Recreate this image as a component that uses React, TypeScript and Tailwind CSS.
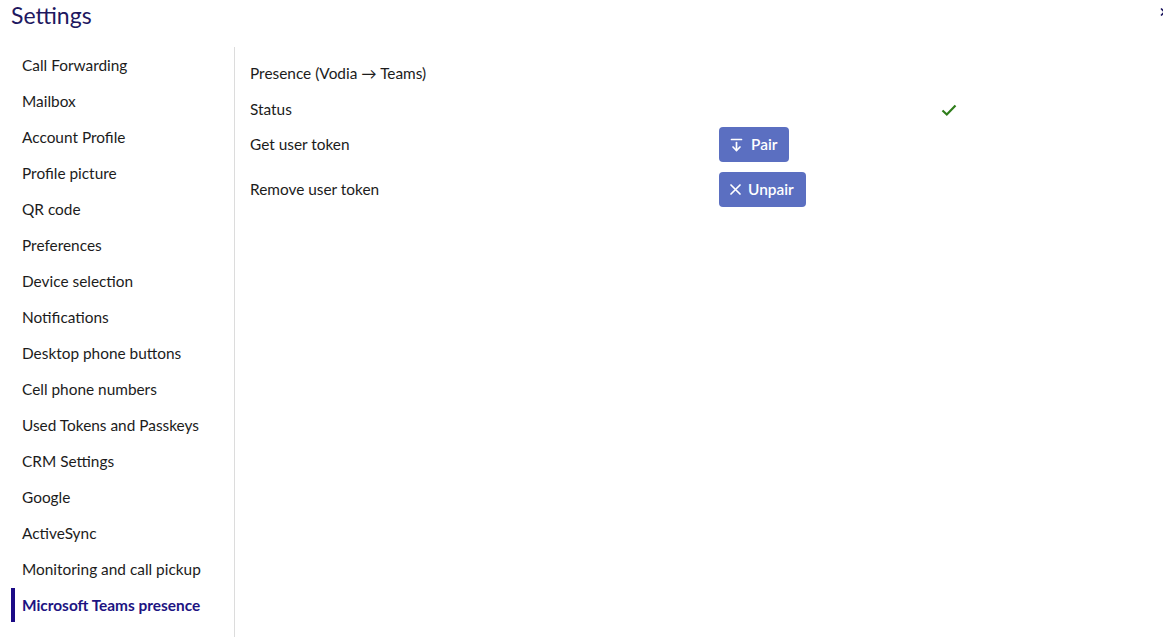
import React from "react";

const items = [
  "Call Forwarding",
  "Mailbox",
  "Account Profile",
  "Profile picture",
  "QR code",
  "Preferences",
  "Device selection",
  "Notifications",
  "Desktop phone buttons",
  "Cell phone numbers",
  "Used Tokens and Passkeys",
  "CRM Settings",
  "Google",
  "ActiveSync",
  "Monitoring and call pickup",
  "Microsoft Teams presence",
];

export default function App() {
  return (
    <div
      className="relative w-[1163px] h-[637px] overflow-hidden bg-white text-[#1c1c1c]"
      style={{ fontFamily: "Lato, 'Noto Sans', sans-serif" }}
    >
      <div className="h-[47px] pl-[11px]">
        <h1 className="text-[23px] leading-[31px] text-[#1e1860]">Settings</h1>
      </div>
      <svg className="absolute left-[1159px] top-[7px]" width="10" height="9" viewBox="0 0 10 9">
        <path d="M2 1.5 L9 8.5 M9 1.5 L2 8.5" stroke="#1e1860" strokeWidth="1.6" />
      </svg>
      <div className="flex">
        <nav className="w-[235px] h-[590px] border-r border-[#dcdcdc] pl-[11px]">
          {items.map((it, i) => {
            const active = i === items.length - 1;
            return (
              <div key={it} className="h-9 flex items-center">
                <div className={`w-[4px] h-[34px] ${active ? "bg-[#1c0b86]" : ""}`} />
                <span
                  className={`pl-[7px] pt-[2px] text-[15.4px] ${active ? "font-bold text-[#1d1482]" : ""}`}
                >
                  {it}
                </span>
              </div>
            );
          })}
        </nav>
        <div className="pl-[15px] pt-[9px] text-[15.4px]">
          <div className="h-9 flex items-center">Presence (Vodia → Teams)</div>
          <div className="h-9 flex items-center">
            <div className="w-[469px]">Status</div>
            <div className="w-[240px] flex">
              <svg className="ml-[222px] -mt-[1px]" width="16" height="14" viewBox="0 0 16 14">
                <path d="M1.5 7.5 L5.8 11.5 L14.5 2.5" fill="none" stroke="#2f7d1b" strokeWidth="2.2" />
              </svg>
            </div>
          </div>
          <div className="h-[35px] -mt-[1px] flex items-center">
            <div className="w-[469px] pt-[1px]">Get user token</div>
            <button className="h-[35px] rounded-[4px] bg-[#5b6fc1] text-white flex items-center pl-[11px] pr-[12px] gap-[8px] font-semibold">
              <svg width="13" height="14" viewBox="0 0 13 14" fill="none" stroke="white" strokeWidth="1.7" strokeLinecap="round" strokeLinejoin="round">
                <path d="M1.5 1.5 H11.5" />
                <path d="M6.5 4.5 V12.5" />
                <path d="M3 9 L6.5 12.5 L10 9" />
              </svg>
              <span>Pair</span>
            </button>
          </div>
          <div className="h-[35px] mt-[10px] flex items-center">
            <div className="w-[469px]">Remove user token</div>
            <button className="h-[35px] rounded-[4px] bg-[#5b6fc1] text-white flex items-center pl-[11px] pr-[12px] gap-[7px] font-semibold">
              <svg width="11" height="11" viewBox="0 0 11 11" fill="none" stroke="white" strokeWidth="1.7" strokeLinecap="round">
                <path d="M1 1 L10 10 M10 1 L1 10" />
              </svg>
              <span>Unpair</span>
            </button>
          </div>
        </div>
      </div>
    </div>
  );
}
